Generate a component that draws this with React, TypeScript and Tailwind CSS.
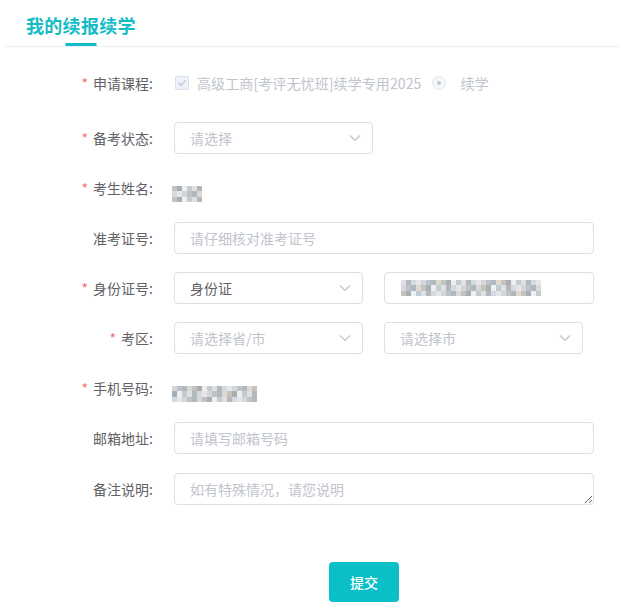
import React from "react";

const palette = ["#e4e4e6", "#cfd3d8", "#b6bcc2", "#a7b2b9", "#d9d5d0", "#c2bcb6", "#9ea7ad", "#eceef0", "#bcc6cc", "#dadde2", "#aeb0b3", "#cdd8de"];

function Mosaic({ cols, rows = 3, seed = 1, cell = 5 }: { cols: number; rows?: number; seed?: number; cell?: number }) {
  const cells: string[] = [];
  let s = seed * 9301 + 49297;
  for (let i = 0; i < cols * rows; i++) {
    s = (s * 9301 + 49297) % 233280;
    cells.push(palette[s % palette.length]);
  }
  return (
    <div className="inline-grid opacity-90" style={{ gridTemplateColumns: `repeat(${cols}, ${cell}px)`, gridAutoRows: `${cell + 0.5}px` }}>
      {cells.map((c, i) => (
        <div key={i} style={{ background: c }} />
      ))}
    </div>
  );
}

function Chevron() {
  return (
    <svg width="12" height="8" viewBox="0 0 12 8" className="shrink-0">
      <polyline points="1,1.5 6,6.5 11,1.5" fill="none" stroke="#c0c4cc" strokeWidth="1.2" />
    </svg>
  );
}

function Label({ text, required }: { text: string; required?: boolean }) {
  return (
    <div className="w-[174px] shrink-0 pr-[21px] text-right text-[14px] text-[#606266] leading-[32px]">
      {required && <span className="text-[#f56c6c] mr-[5px]">*</span>}
      {text}
    </div>
  );
}

function Select({ value, placeholder, width }: { value?: string; placeholder?: string; width: string }) {
  return (
    <div className={`${width} h-[32px] border border-[#dcdfe6] rounded-[4px] flex items-center pl-[15px] pr-[11px] justify-between`}>
      <span className={`text-[14px] ${value ? "text-[#606266]" : "text-[#c0c4cc]"}`}>{value ?? placeholder}</span>
      <Chevron />
    </div>
  );
}

function Input({ placeholder, width }: { placeholder: string; width: string }) {
  return (
    <div className={`${width} h-[32px] border border-[#dcdfe6] rounded-[4px] flex items-center px-[15px]`}>
      <span className="text-[14px] text-[#c0c4cc]">{placeholder}</span>
    </div>
  );
}

function Row({ children, className = "" }: { children: React.ReactNode; className?: string }) {
  return <div className={`flex items-center h-[32px] ${className}`}>{children}</div>;
}

export default function App() {
  return (
    <div
      className="w-[624px] h-[612px] bg-white overflow-hidden"
      style={{ fontFamily: '"Noto Sans CJK SC", "Noto Sans", sans-serif' }}
    >
      <div className="mx-[4px] border-b border-[#ebeef5] h-[47px] pl-[22px]">
        <div className="relative inline-block h-[46px] pt-[12px]">
          <span className="text-[18px] font-bold text-[#14bcc6] leading-[26px] tracking-[0.3px]">我的续报续学</span>
          <div className="absolute bottom-0 left-1/2 -translate-x-1/2 w-[31px] h-[3px] bg-[#14bcc6]" />
        </div>
      </div>

      <div className="pt-[20px]">
        <Row className="mb-[23px]">
          <Label text="申请课程:" required />
          <div className="flex items-center text-[14px] text-[#c0c4cc]">
            <div className="ml-[1px] w-[14px] h-[14px] border border-[#dcdfe6] bg-[#edf2fc] rounded-[2px] flex items-center justify-center">
              <svg width="10" height="8" viewBox="0 0 10 8">
                <polyline points="1.5,4 4,6.3 8.5,1.5" fill="none" stroke="#c0c4cc" strokeWidth="1.2" />
              </svg>
            </div>
            <span className="ml-[8px] tracking-[0.1px]">高级工商[考评无忧班]续学专用2025</span>
            <div className="ml-[11px] w-[14px] h-[14px] rounded-full border border-[#e4e7ed] bg-[#f5f7fa] flex items-center justify-center">
              <div className="w-[4px] h-[4px] rounded-full bg-[#c0c4cc]" />
            </div>
            <span className="ml-[14px]">续学</span>
          </div>
        </Row>

        <Row className="mb-[18px]">
          <Label text="备考状态:" required />
          <Select placeholder="请选择" width="w-[199px]" />
        </Row>

        <Row className="mb-[18px]">
          <Label text="考生姓名:" required />
          <div className="-ml-[2px] mt-[-2px]">
            <Mosaic cols={6} seed={3} />
          </div>
        </Row>

        <Row className="mb-[18px]">
          <Label text="准考证号:" />
          <Input placeholder="请仔细核对准考证号" width="w-[420px]" />
        </Row>

        <Row className="mb-[18px]">
          <Label text="身份证号:" required />
          <Select value="身份证" width="w-[189px]" />
          <div className="ml-[21px] w-[210px] h-[32px] border border-[#dcdfe6] rounded-[4px] flex items-center pl-[16px]">
            <Mosaic cols={28} rows={3} seed={7} />
          </div>
        </Row>

        <Row className="mb-[18px]">
          <Label text="考区:" required />
          <Select placeholder="请选择省/市" width="w-[189px]" />
          <div className="ml-[21px]">
            <Select placeholder="请选择市" width="w-[199px]" />
          </div>
        </Row>

        <Row className="mb-[18px]">
          <Label text="手机号码:" required />
          <div className="-ml-[2px] mt-[-2px]">
            <Mosaic cols={17} seed={11} />
          </div>
        </Row>

        <Row className="mb-[19px]">
          <Label text="邮箱地址:" />
          <Input placeholder="请填写邮箱号码" width="w-[420px]" />
        </Row>

        <div className="flex items-start">
          <Label text="备注说明:" />
          <textarea
            readOnly
            placeholder="如有特殊情况，请您说明"
            className="w-[420px] h-[32px] border border-[#dcdfe6] rounded-[4px] px-[15px] py-[4px] text-[14px] leading-[22px] text-[#606266] placeholder:text-[#c0c4cc] outline-none"
          />
        </div>

        <div className="mt-[57px] pl-[329px]">
          <button className="w-[70px] h-[40px] rounded-[4px] bg-[#0bbfc9] text-white text-[14px] font-medium">提交</button>
        </div>
      </div>
    </div>
  );
}
